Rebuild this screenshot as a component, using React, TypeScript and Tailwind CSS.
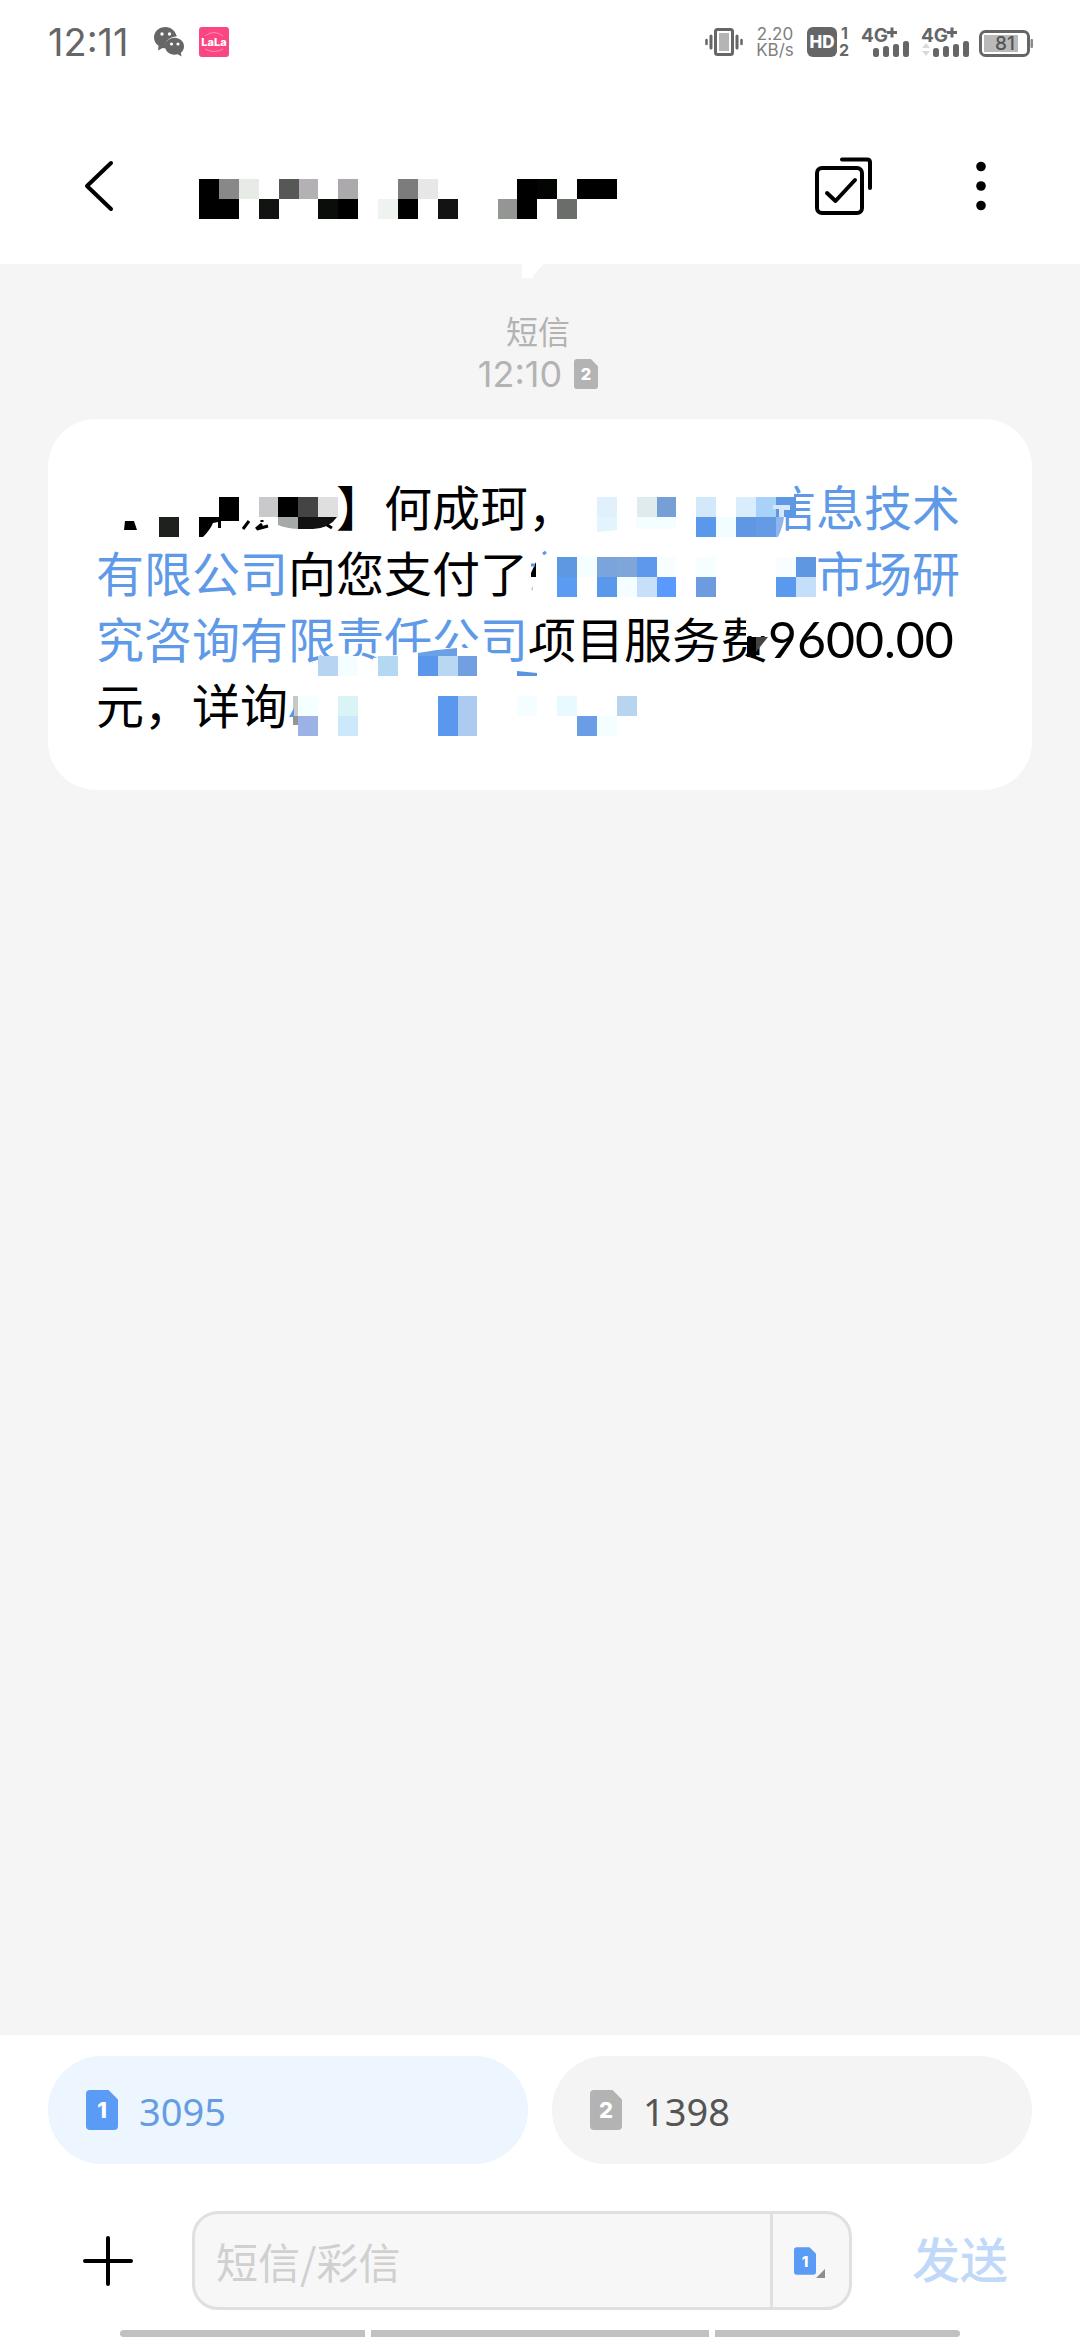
import { useState } from "react";

type Cell = [col: number, row: number, fill: string];

// censor blocks sit on one grid; these are the grid's origin and pitch
const GRID_X = 159;
const GRID_Y = 497;
const PITCH = 19.9;

const titleCells: Cell[] = [
  [0, 0, "#000000"],
  [1, 0, "#888888"],
  [2, 0, "#e6ebe6"],
  [4, 0, "#555855"],
  [5, 0, "#b3b1b3"],
  [7, 0, "#aba9ab"],
  [10, 0, "#7c7c7c"],
  [11, 0, "#e7e7e7"],
  [16, 0, "#000000"],
  [17, 0, "#020502"],
  [19, 0, "#000000"],
  [20, 0, "#000000"],
  [0, 1, "#000000"],
  [1, 1, "#000000"],
  [3, 1, "#111411"],
  [6, 1, "#0a0d0a"],
  [7, 1, "#000000"],
  [9, 1, "#eff3ef"],
  [10, 1, "#000000"],
  [12, 1, "#111411"],
  [15, 1, "#949694"],
  [16, 1, "#000000"],
  [18, 1, "#6b6d6b"],
];

const messageCells: Cell[] = [
  [3, 0, "#000000"],
  [5, 0, "#c9c9cb"],
  [6, 0, "#000000"],
  [7, 0, "#444444"],
  [8, 0, "#dfdfe0"],
  [22, 0, "#e0f0fc"],
  [24, 0, "#e0ebef"],
  [25, 0, "#759fd5"],
  [27, 0, "#d3e8fa"],
  [29, 0, "#d9edfc"],
  [30, 0, "#a8d2f8"],
  [31, 0, "#5f98e2"],
  [0, 1, "#1f211f"],
  [27, 1, "#5a98ec"],
  [28, 1, "#f2fdff"],
  [29, 1, "#5f97e4"],
  [30, 1, "#659ae4"],
  [20, 3, "#5f98e2"],
  [21, 3, "#f4feff"],
  [22, 3, "#7ba3dc"],
  [23, 3, "#7ea6d8"],
  [24, 3, "#5d98ec"],
  [25, 3, "#f8fdff"],
  [27, 3, "#f6feff"],
  [31, 3, "#f8feff"],
  [32, 3, "#5f97e0"],
  [20, 4, "#5a9bf3"],
  [22, 4, "#5a98ec"],
  [23, 4, "#f4fdff"],
  [24, 4, "#c7dff9"],
  [25, 4, "#5a99fd"],
  [27, 4, "#6c9cdf"],
  [31, 4, "#5a9aee"],
  [32, 4, "#c4dffa"],
  [8, 8, "#b7d5f2"],
  [9, 8, "#f4fdff"],
  [11, 8, "#b5d8f2"],
  [13, 8, "#5a97ec"],
  [14, 8, "#b7d7f2"],
  [15, 8, "#719fe1"],
  [7, 10, "#f4ffff"],
  [9, 10, "#daf3f4"],
  [14, 10, "#5a98f0"],
  [15, 10, "#adcaf0"],
  [18, 10, "#f4fdff"],
  [20, 10, "#e8f9ff"],
  [23, 10, "#b8d5f0"],
  [7, 11, "#9cb2e6"],
  [9, 11, "#cde8fa"],
  [14, 11, "#5a98f0"],
  [15, 11, "#adcaf0"],
  [21, 11, "#6a9de6"],
  [22, 11, "#f4fdff"],
];

function Cells({ cells, x, y }: { cells: Cell[]; x: number; y: number }) {
  return (
    <g shapeRendering="crispEdges">
      {cells.map(([col, row, fill]) => (
        <rect
          key={`${col}-${row}`}
          x={x + col * PITCH}
          y={y + row * PITCH}
          width={PITCH}
          height={PITCH}
          fill={fill}
        />
      ))}
    </g>
  );
}

function MessageCensor() {
  return (
    <svg
      className="pointer-events-none absolute left-0 top-0 h-[371px] w-[984px]"
      viewBox="48 419 984 371"
      aria-hidden="true"
    >
      {/* erased parts of the glyphs */}
      <g fill="#ffffff">
        <path d="M766 480H794V500H779V540H766Z" />
        <path d="M746 617H768V636H746Z" />
        <path d="M529 617H544V622L534 628H529Z" />
        <path d="M373 658L417 652L437 648H476L487 651L500 657V680H373Z" />
      </g>
      <Cells cells={messageCells} x={GRID_X} y={GRID_Y} />

      {/* line 1 leftovers */}
      <path d="M125 521H134L137 530H124Z" fill="#000" />
      <path d="M199 517H239V521H221V528H218V522L213 523Q210 530 203 537H199Z" fill="#000" />
      <path d="M243 529L249 521M256 529L262 524M257 529L268 526M262 520V522" stroke="#000" strokeWidth="3" fill="none" />
      <path d="M278 517H298V529Q285 528 278 525Z" fill="#a6aaa6" />
      <path d="M298 517H337Q330 528 313 529H298Z" fill="#111111" />
      <path d="M327 525L332 528" stroke="#000" strokeWidth="3" />
      <path d="M597 517H617V530L597 532Z" fill="#e4f4fd" />
      <path d="M636 517H676V529H636Z" fill="#f4fdff" />
      <path d="M776 517H784Q783 527 778 537H776Z" fill="#8db6ec" />
      <path d="M773 505H790V510H784V517H779V509H773Z" fill="#d7e7fb" />

      {/* line 2 leftovers */}
      <path d="M531 573L536 562V577H531Z" fill="#000" />
      <path d="M531 565H535M543 554L546 552" stroke="#5a95e6" strokeWidth="3" />
      <path d="M531 589L533 586V591Z" fill="#c3c3f0" />

      {/* line 3 leftovers */}
      <path d="M418 656V653L437 650L457 648V656Z" fill="#6b9fe6" />
      <path d="M517 671L537 673V676H517Z" fill="#5a93e0" />
      <path d="M747 637H756V657H747Z" fill="#000" />
      <path d="M756 637H768L756 652Z" fill="#444444" />

      {/* line 4 leftovers */}
      <path d="M293 696H298V716H293Z" fill="#c8c8c8" />
      <path d="M293 716H298V725H293Z" fill="#949494" />
      <path d="M289 717L294 708V717Z" fill="#5a98f0" />
    </svg>
  );
}

function SimIcon({ slot, className }: { slot: 1 | 2; className: string }) {
  return (
    <svg className={className} viewBox="0 0 32 40" aria-hidden="true">
      <path d="M4 0H22.500L32 9.500V36Q32 40 28 40H4Q0 40 0 36V4Q0 0 4 0Z" fill="currentColor" />
      <text x="16" y="28" textAnchor="middle" fontFamily="Inter" fontSize="22" fontWeight="800" fill="#fff">
        {slot}
      </text>
    </svg>
  );
}

function Signal({ dimArrows = false }: { dimArrows?: boolean }) {
  return (
    <svg className="h-[30px] w-12 overflow-visible" viewBox="0 0 48 30" fill="#666666" aria-hidden="true">
      <text x="0" y="15" fontFamily="Inter" fontSize="19" fontWeight="700">
        4G
      </text>
      <path d="M26 4h3.500V0.500h3V4H36v3h-3.500v3.500h-3V7H26Z" />
      {dimArrows && <path d="M1 21L5 16L9 21ZM1 24H9L5 29Z" fill="#d9d9d9" />}
      <rect x="12" y="21" width="6" height="9" rx="2.500" />
      <rect x="22" y="19" width="6" height="11" rx="2.500" />
      <rect x="32" y="17" width="6" height="13" rx="2.500" />
      <rect x="42" y="14" width="6" height="16" rx="2.500" />
    </svg>
  );
}

function StatusBar() {
  return (
    <div className="flex h-[84px] items-center justify-between pl-12 pr-[47px] text-[#666666]">
      <div className="flex items-center">
        <span className="w-[106px] font-['Inter'] text-[38px] leading-[40px]">12:11</span>
        <svg className="h-[30px] w-[30px]" viewBox="0 0 30 30" aria-hidden="true">
          <path d="M11.500 0C5 0 0 4.600 0 10.500c0 3.500 1.800 6.400 4.600 8.300L4 23.500l4.600-2.600c1 .2 2 .3 3 .3C11 14 15 10 22.800 9.600 21.500 4 17 0 11.500 0Z" fill="#666666" />
          <path d="M20.500 10.800c-5.300 0-9.500 3.600-9.500 8.400s4.200 8.500 9.500 8.500c1.200 0 2.300-.2 3.300-.5l3.700 2.300-.6-3.700c1.900-1.600 3.100-3.900 3.100-6.600 0-4.800-4.200-8.400-9.500-8.400Z" fill="#666666" />
          <circle cx="8" cy="7" r="1.700" fill="#fff" />
          <circle cx="15.500" cy="7" r="1.700" fill="#fff" />
          <circle cx="17.500" cy="17" r="1.600" fill="#fff" />
          <circle cx="24" cy="17" r="1.600" fill="#fff" />
        </svg>
        <svg className="ml-[15px] h-[30px] w-[30px]" viewBox="0 0 30 30" aria-hidden="true">
          <rect width="30" height="30" rx="3" fill="#fb4683" />
          <path d="M6 9Q15 2 24 9M6 22Q15 27 24 22" stroke="#ff8db4" strokeWidth="1" fill="none" />
          <text x="15" y="19" textAnchor="middle" fontFamily="Inter" fontSize="11" fontWeight="800" fill="#fff">
            LaLa
          </text>
        </svg>
      </div>

      <div className="flex items-center">
        <svg className="h-[30px] w-[38px]" viewBox="0 0 38 30" fill="none" stroke="#666666" strokeLinecap="round" aria-hidden="true">
          <rect x="10.500" y="2.500" width="17" height="25" rx="2" strokeWidth="3" />
          <rect x="14" y="6" width="10" height="18" fill="#b5b5b5" stroke="none" />
          <path d="M1.500 13V17M36.500 13V17" strokeWidth="2.500" />
          <path d="M6 9V21M32 9V21" strokeWidth="3" />
        </svg>
        <div className="ml-3 w-10 text-center font-['Inter'] text-[17px] leading-[16px] text-[#808080]">
          <p>2.20</p>
          <p>KB/s</p>
        </div>
        <svg className="ml-3 h-[30px] w-[42px] overflow-visible" viewBox="0 0 42 30" fontFamily="Inter" fontWeight="700" aria-hidden="true">
          <rect width="30" height="30" rx="6" fill="#666666" />
          <text x="15" y="21" textAnchor="middle" fontSize="17" fontWeight="800" fill="#fff">HD</text>
          <text x="34" y="12" fontSize="16" fill="#666666">1</text>
          <text x="32" y="29" fontSize="16" fill="#666666">2</text>
        </svg>
        <div className="ml-3">
          <Signal />
        </div>
        <div className="ml-3">
          <Signal dimArrows />
        </div>
        <svg className="ml-[10px] h-[30px] w-[54px]" viewBox="0 0 54 30" aria-hidden="true">
          <rect x="1.500" y="4.500" width="48" height="24" rx="5" fill="none" stroke="#666666" strokeWidth="3" />
          <rect x="5" y="8" width="34" height="17" fill="#b9b9b9" />
          <rect x="51.500" y="12" width="2.500" height="9" rx="1" fill="#8a8a8a" />
          <text x="26" y="23" textAnchor="middle" fontFamily="Inter" fontSize="19" fontWeight="500" fill="#555555">
            81
          </text>
        </svg>
      </div>
    </div>
  );
}

function ChatHeader() {
  return (
    <header className="flex h-[180px] items-center pl-[84px] pr-[89px] pt-6">
      <button type="button" aria-label="返回">
        <svg className="h-[52px] w-8" viewBox="0 0 32 52" fill="none" stroke="#000" strokeWidth="4" strokeLinecap="round" strokeLinejoin="round">
          <path d="M27 3L3 26L27 49" />
        </svg>
      </button>
      <h1 className="ml-[83px] pt-[26px]">
        <svg className="h-10 w-[418px]" viewBox="0 0 418 40" role="img" aria-label="联系人">
          <Cells cells={titleCells} x={0} y={0} />
        </svg>
      </h1>
      <button type="button" aria-label="选择" className="ml-auto">
        <svg className="h-[60px] w-[60px]" viewBox="0 0 60 60" fill="none" stroke="#000" strokeWidth="4" strokeLinecap="round" strokeLinejoin="round">
          <rect x="4" y="12" width="45" height="45" rx="5" />
          <path d="M14 37L22.500 45L42 24" />
          <path d="M29 3.500H54Q57 3.500 57 6.500V32" />
        </svg>
      </button>
      <button type="button" aria-label="更多" className="ml-[98px]">
        <svg className="h-[60px] w-5" viewBox="0 0 20 60">
          <circle cx="10" cy="10.500" r="4.800" />
          <circle cx="10" cy="30" r="4.800" />
          <circle cx="10" cy="49.500" r="4.800" />
        </svg>
      </button>
    </header>
  );
}

function Composer() {
  const [text, setText] = useState("");

  return (
    <footer className="bg-white pb-[3px] pt-[21px]">
      <div className="flex gap-6 px-12 text-[38px]">
        <button type="button" className="flex h-[108px] flex-1 items-center gap-[21px] rounded-full bg-[#edf5ff] pl-[38px] text-[#669de2]">
          <SimIcon slot={1} className="h-10 w-8 text-[#5a9bf5]" />
          <span className="pt-[2px] font-['Noto_Sans']">3095</span>
        </button>
        <button type="button" className="flex h-[108px] flex-1 items-center gap-[21px] rounded-full bg-[#f4f4f4] pl-[38px] text-[#555555]">
          <SimIcon slot={2} className="h-10 w-8 text-[#b3b3b3]" />
          <span className="pt-[2px] font-['Noto_Sans']">1398</span>
        </button>
      </div>

      <div className="mt-[47px] flex items-center pl-[82px] pr-[72px]">
        <button type="button" aria-label="添加">
          <svg className="h-[52px] w-[52px]" viewBox="0 0 52 52" stroke="#000" strokeWidth="4" strokeLinecap="round">
            <path d="M26 3V49M3 26H49" />
          </svg>
        </button>
        <div className="ml-[58px] flex h-[99px] min-w-0 flex-1 overflow-hidden rounded-[26px] border-[3px] border-[#e0e0e0] bg-[#f7f7f7]">
          <input
            type="text"
            aria-label="短信/彩信"
            placeholder="短信/彩信"
            value={text}
            onChange={(e) => setText(e.target.value)}
            className="min-w-0 flex-1 bg-transparent pl-[21px] font-['Noto_Sans_CJK_SC',sans-serif] text-[42px] text-black outline-none placeholder:text-[#d0d0d0]"
          />
          <button type="button" aria-label="切换卡" className="flex w-[79px] items-center border-l-[3px] border-[#e0e0e0] pl-[21px]">
            <SimIcon slot={1} className="h-7 w-[22px] text-[#5a9bf5]" />
            <svg className="mt-[26px] h-[9px] w-[9px]" viewBox="0 0 9 9" fill="#8c8f8c" aria-hidden="true">
              <path d="M9 0V9H0Z" />
            </svg>
          </button>
        </div>
        <button type="button" disabled className="ml-[60px] pb-2 text-[48px] font-medium leading-[66px] text-[#c0d9f9]">
          发送
        </button>
      </div>

      <div className="mt-5 flex gap-[6px] px-[120px]">
        <span className="h-[7px] w-[245px] rounded-l-full bg-[#c1c1c1]" />
        <span className="h-[7px] flex-1 bg-[#c1c1c1]" />
        <span className="h-[7px] w-[245px] rounded-r-full bg-[#c1c1c1]" />
      </div>
    </footer>
  );
}

export default function App() {
  return (
    <div className="flex min-h-screen flex-col bg-white font-['Noto_Sans_CJK_SC',sans-serif] text-black">
      <StatusBar />
      <ChatHeader />

      <main className="relative flex-1 bg-[#f5f5f5] px-12 pt-11">
        <svg className="absolute left-[522px] top-0 h-[14px] w-[22px]" viewBox="0 0 22 14" fill="#fff" aria-hidden="true">
          <path d="M0 0H22Q15 6 10 14H0Z" />
        </svg>

        <div className="flex flex-col items-center pr-1 text-[#b3b3b3]">
          <p className="text-[32px] leading-[44px]">短信</p>
          <div className="flex items-center gap-3">
            <time className="font-['Inter'] text-[36px] leading-[44px]">12:10</time>
            <SimIcon slot={2} className="h-[30px] w-6" />
          </div>
        </div>

        <article className="relative mt-[23px] rounded-[48px] bg-white px-12 pb-[54px] pt-[53px]">
          <p className="text-[48px] leading-[66px]">
            <span className="inline-block w-[5em]" />
            】何成珂，
            <span className="inline-block w-[4em]" />
            <a href="#company" className="text-[#5f9ae8]">
              信息技术有限公司
            </a>
            向您支付了
            <span className="inline-block w-[6em]" />
            <a href="#agency" className="text-[#5f9ae8]">
              市场研究咨询有限责任公司
            </a>
            项目服务费
            <span className="font-['Lato'] text-[50px] leading-none">9600.00</span>
            元，详询
          </p>
          <MessageCensor />
        </article>
      </main>

      <Composer />
    </div>
  );
}
